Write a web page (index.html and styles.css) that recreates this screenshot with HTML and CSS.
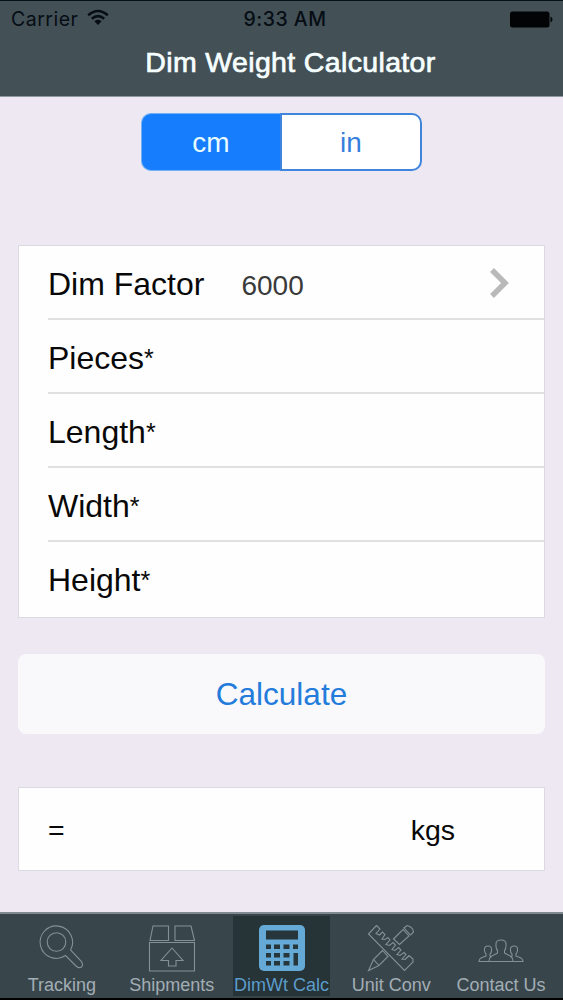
FILE: index.html
```html
<!DOCTYPE html>
<html lang="en">
<head>
<meta charset="UTF-8" />
<meta name="viewport" content="width=device-width, initial-scale=1.0"/>
<title>Dim Weight Calculator</title>
<link rel="stylesheet" href="styles.css">
</head>
<body>

<header class="header">
  <div class="status">
    <div class="carrier">
      <span>Carrier</span>
      <svg class="wifi" width="22" height="17" viewBox="0 0 22 17">
        <path d="M1.2 6.2Q11 -2.2 20.8 6.2M4.8 9.8Q11 4.6 17.2 9.8" fill="none" stroke="#060d14" stroke-width="2.6"/>
        <path d="M7.4 12.2Q11 9.4 14.6 12.2L11 16Z" fill="#060d14"/>
      </svg>
    </div>
    <span class="time">9:33 AM</span>
    <svg class="battery" width="43" height="17" viewBox="0 0 43 17">
      <rect x="0" y="0.5" width="39.5" height="16" rx="2.5" fill="#020406"/>
      <path d="M40.5 5.5q2 .8 2 3t-2 3z" fill="#020406"/>
    </svg>
  </div>
  <h1 class="title">Dim Weight Calculator</h1>
</header>

<main class="content">
  <div class="segment">
    <button class="seg active">cm</button>
    <button class="seg">in</button>
  </div>

  <div class="form">
    <div class="row">
      <span>Dim Factor</span>
      <span class="value">6000</span>
      <svg class="chevron" width="22" height="32" viewBox="0 0 22 32">
        <path d="M3 3L16 16L3 29" fill="none" stroke="#b9b9b9" stroke-width="5.5"/>
      </svg>
    </div>
    <div class="row"><span>Pieces</span><span class="star">*</span></div>
    <div class="row"><span>Length</span><span class="star">*</span></div>
    <div class="row"><span>Width</span><span class="star">*</span></div>
    <div class="row"><span>Height</span><span class="star">*</span></div>
  </div>

  <button class="calculate">Calculate</button>

  <div class="result">
    <span class="equals">=</span>
    <span class="unit">kgs</span>
  </div>
</main>

<nav class="tabs">
  <a class="tab">
    <svg class="icon" viewBox="0 0 48 48">
      <circle cx="18.500" cy="19" r="9.3"/>
      <path d="M27.500 32.500A16.2 16.2 0 1 1 32.500 27L43.500 38.500Q45.500 42 43.500 44Q41 45.500 38.500 43.500Z"/>
    </svg>
    <span>Tracking</span>
  </a>
  <a class="tab">
    <svg class="icon" viewBox="0 0 48 48">
      <path d="M1.500 19.500H46.500V48H1.500ZM5 3H20.500V17.500H2ZM27 3H43L46.500 17.500H27Z"/>
      <path d="M24 25L35 37.500H28V43H20.500V37.500H13Z"/>
    </svg>
    <span>Shipments</span>
  </a>
  <a class="tab active">
    <svg class="icon solid" viewBox="0 0 48 48">
      <rect x="1" y="2" width="46" height="46" rx="5" fill="#65a9d7"/>
      <g fill="#26363b">
        <rect x="8" y="7.500" width="32" height="9"/>
        <rect x="8" y="21.500" width="5" height="4.500"/>
        <rect x="16" y="21.500" width="6" height="4.500"/>
        <rect x="25.500" y="21.500" width="6" height="4.500"/>
        <rect x="35" y="21.500" width="5" height="4.500"/>
        <rect x="8" y="30" width="5" height="4.500"/>
        <rect x="16" y="30" width="6" height="4.500"/>
        <rect x="25.500" y="30" width="6" height="4.500"/>
        <rect x="8" y="38" width="5" height="4.500"/>
        <rect x="16" y="38" width="6" height="4.500"/>
        <rect x="25.500" y="38" width="6" height="4.500"/>
        <rect x="35.500" y="30" width="4.500" height="12.500"/>
      </g>
    </svg>
    <span>DimWt Calc</span>
  </a>
  <a class="tab">
    <svg class="icon" viewBox="0 0 48 48">
      <!-- ruler -->
      <path d="M9.500 2.500L1.500 11L37.500 47.500L46 39V36L42 32.500L38 36.500M9.500 2.500L13 6L9 10.500L12.500 12L15.500 9L18 11.500L15 16L18 16.500L21 14.500L23 17L19 21.500L22.500 22.500L26 19.500L28.500 22L25 26.500L28 27.500L31.500 24.500L34 27L30 31.500L33 32.500L37 29.500L39 31.500L35 36L38 36.500L42 33"/>
      <!-- pencil -->
      <path d="M26.500 16L36 6.500L42 13L32.500 21.500ZM37 5L40 2.500Q46 4 46.500 9L43.500 12ZM15.500 27.500L6.500 36.500L12 42.500L21 33.500ZM6.500 36.500L1.500 47.500L12 42.500"/>
    </svg>
    <span>Unit Conv</span>
  </a>
  <a class="tab">
    <svg class="icon" viewBox="0 0 48 48">
      <path d="M12 38.500C12 32 17 32.500 20.500 30V27.500C18.500 25.500 19 23 19 21Q19 17 24 17T29 21C29 23 29.500 25.500 27.500 27.500V30C31 32.500 36 32 36 38.500Z"/>
      <path d="M12 38.500H2C2 34 6 34.500 9 33V31C7 29 7.500 27 7.500 26Q7.500 23 11 23T14.500 26C14.500 28 15 29.500 13 31V33L15 34M36 38.500H46C46 34 42 34.500 39 33V31C41 29 40.500 27 40.500 26Q40.500 23 37 23T33.500 26C33.500 28 33 29.500 35 31V33L33 34"/>
    </svg>
    <span>Contact Us</span>
  </a>
</nav>

</body>
</html>
```

FILE: styles.css
```css
* {
  box-sizing: border-box;
}
body {
  margin: 0;
  height: 1000px;
  display: flex;
  flex-direction: column;
  font-family: "Liberation Sans", Arial, sans-serif;
  color: #080808;
  background-color: #ede8f1;
}
button {
  font-family: inherit;
  cursor: pointer;
}
.header {
  height: 97px;
  background-color: #435056;
  border-top: 1px solid #071018;
  border-bottom: 1px solid #8e979f;
}
.status {
  height: 36px;
  padding: 0 10px 0 11px;
  display: grid;
  grid-template-columns: 1fr auto 1fr;
  align-items: center;
  color: #060d14;
  font-family: Inter, "Liberation Sans", sans-serif;
  font-size: 19.5px;
  letter-spacing: 0.5px;
}
.carrier {
  display: flex;
  align-items: center;
  gap: 9px;
}
.wifi {
  margin-top: -3px;
}
.time {
  font-weight: 500;
  position: relative;
  left: 3px;
}
.battery {
  justify-self: end;
}
.title {
  margin: 8px 0 0 18px;
  font-size: 28.5px;
  line-height: 34px;
  font-weight: normal;
  letter-spacing: 0.35px;
  text-align: center;
  color: #f6ffff;
  -webkit-text-stroke: 0.7px #f6ffff;
}
.content {
  flex: 1;
  padding: 16px 18px 0;
}
.segment {
  width: 281px;
  height: 58px;
  margin: 0 auto 74px;
  display: flex;
}
.seg {
  flex: 1;
  padding: 2px 0 0;
  border: 2px solid #3f85dc;
  border-radius: 0 10px 10px 0;
  font-size: 28px;
  color: #3580dc;
  background-color: #fff;
}
.seg.active {
  color: #e8fbff;
  background-color: #167efc;
  border: 1px solid #74b2f6;
  border-right: none;
  border-radius: 10px 0 0 10px;
}
.form {
  height: 373px;
  padding-left: 29px;
  background-color: #fefefe;
  border: 1px solid #dcdae1;
}
.row {
  height: 74px;
  display: flex;
  align-items: center;
  padding-top: 4px;
  font-size: 32px;
  border-bottom: 2px solid #e0dfe2;
}
.row:last-child {
  padding-top: 2px;
  border-bottom: none;
}
.value {
  margin: 3px 0 0 37px;
  font-size: 28px;
  color: #3a3a3a;
}
.chevron {
  margin: -2px 33px 0 auto;
}
.star {
  font-size: 25px;
}
.calculate {
  width: 527px;
  height: 80px;
  margin: 36px 0 53px;
  border: none;
  border-radius: 8px;
  background-color: #f9f8fa;
  color: #237cdb;
  font-size: 31.5px;
}
.result {
  height: 84px;
  padding: 2px 89px 0 29px;
  display: flex;
  align-items: center;
  justify-content: space-between;
  background-color: #fefefe;
  border: 1px solid #dcdae1;
  font-size: 28.5px;
}
.tabs {
  height: 88px;
  padding: 0 7px;
  display: flex;
  justify-content: space-between;
  background-color: #38464c;
  border-top: 2px solid #808990;
  border-bottom: 2px solid #000;
}
.tab {
  width: 110px;
  padding-top: 8px;
  display: flex;
  flex-direction: column;
  align-items: center;
  font-size: 18px;
  line-height: 20px;
  white-space: nowrap;
  color: #a3adb4;
}
.tab.active {
  width: 98px;
  margin: 2px 6px;
  padding-top: 6px;
  color: #5c9ccb;
  background-color: #263337;
}
.icon {
  width: 48px;
  height: 50px;
  margin-bottom: 3px;
  fill: none;
  stroke: #849096;
  stroke-width: 1.1;
}
.icon.solid {
  stroke: none;
}
```
